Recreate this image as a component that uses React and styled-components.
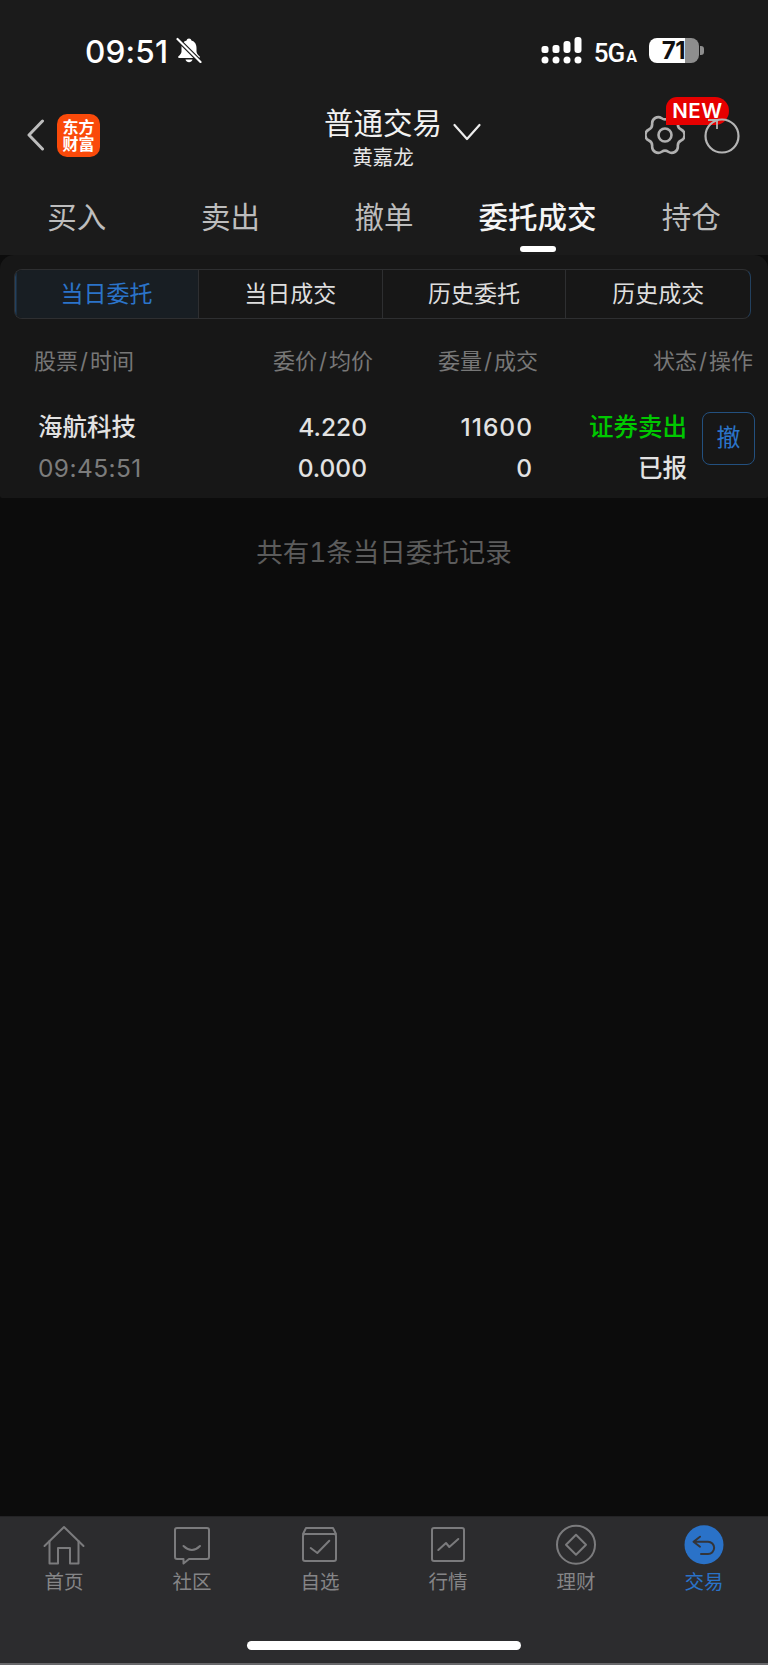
import React from 'react'
import styled, { createGlobalStyle } from 'styled-components'

const FONT = `Inter, "Noto Sans CJK SC", sans-serif`

const GlobalStyle = createGlobalStyle`
html, body {
  margin: 0;
  padding: 0;
  background: #0c0c0c;
  font-family: ${FONT};
}
* { box-sizing: border-box; }
`

const Page = styled.div`
width: 768px;
height: 1665px;
display: flex;
flex-direction: column;
background: #0c0c0c;
overflow: hidden;
`
const Top = styled.div`
background: #1b1b1b;
`
const StatusBar = styled.div`
height: 100px;
display: flex;
align-items: flex-start;
padding: 37px 64px 0 85px;
color: #fff;
`
const Time = styled.div`
font-size: 31.5px;
font-weight: 500;
line-height: 30px;
margin-right: 8px;
letter-spacing: 0.2px;
`
const StatusRight = styled.div`
margin-left: auto;
margin-top: -1px;
display: flex;
align-items: center;
`
const Network = styled.div`
font-family: Roboto, sans-serif;
font-size: 26px;
font-weight: 500;
letter-spacing: -1px;
height: 29px;
line-height: 35px;
margin-left: 12px;
margin-right: 12px;
small {
  font-size: 16px;
  font-weight: 700;
  margin-left: 2px;
  letter-spacing: 0;
}
`
const Battery = styled.div`
width: 50px;
height: 25px;
border-radius: 8px;
background: linear-gradient(90deg, #fff 72%, #8e8e8e 72%);
color: #111;
font-size: 24px;
font-weight: 700;
line-height: 25px;
text-align: right;
padding-right: 14px;
letter-spacing: -0.5px;
`
const BatteryCap = styled.div`
width: 4px;
height: 9px;
margin-left: 1px;
border-radius: 0 3px 3px 0;
background: #8e8e8e;
`

const Header = styled.div`
height: 70px;
display: flex;
align-items: center;
padding-right: 26px;
`
const BackGroup = styled.div`
width: 325px;
display: flex;
align-items: center;
padding-left: 26px;
gap: 12px;
`
const Logo = styled.div`
width: 43px;
height: 43px;
border-radius: 10px;
background: #fa4a0a;
color: #fff;
font-size: 16px;
font-weight: 700;
line-height: 17.5px;
text-align: center;
padding-top: 5px;
`
const TitleBlock = styled.div`
width: 116px;
text-align: center;
white-space: nowrap;
margin-top: 7px;
`
const Title = styled.div`
font-size: 29.5px;
line-height: 36px;
margin-left: -1px;
margin-right: -1px;
color: #f2f2f2;
`
const SubTitle = styled.div`
font-size: 20.5px;
line-height: 28px;
margin-top: 3px;
color: #e6e6e6;
`
const TitleArrow = styled.svg`
margin-left: 12px;
margin-top: -7px;
`
const Tools = styled.div`
margin-left: auto;
position: relative;
display: flex;
align-items: center;
gap: 17px;
`
const NewBadge = styled.div`
position: absolute;
left: 21px;
top: -18px;
width: 63px;
height: 28px;
border-radius: 11px 14px 14px 0;
background: #e60000;
color: #fff;
font-size: 20.5px;
font-weight: 600;
line-height: 28px;
text-align: center;
letter-spacing: 0.6px;
`
const RefreshIcon = styled.svg`
position: relative;
top: 1px;
`

const Tabs = styled.div`
height: 85px;
display: grid;
grid-template-columns: repeat(5, 1fr);
padding-top: 27px;
`
const Tab = styled.div`
position: relative;
text-align: center;
font-size: 29.5px;
line-height: 40px;
color: ${p => (p.$active ? '#f5f5f5' : '#bdbdbd')};
font-weight: ${p => (p.$active ? 500 : 400)};
${p =>
    p.$active &&
    `&::after {
  content: '';
  position: absolute;
  left: 50%;
  top: 49px;
  width: 36px;
  height: 6px;
  margin-left: -18px;
  border-radius: 3px;
  background: #fff;
}`}
`

const Panel = styled.div`
background: #171717;
border-radius: 14px 14px 2px 2px;
height: 243px;
padding-top: 14px;
`
const Segments = styled.div`
margin: 0 17px 0 14px;
height: 50px;
display: grid;
grid-template-columns: repeat(4, 1fr);
border: 1.5px solid #2e2f31;
border-right-color: #23415f;
border-radius: 8px;
overflow: hidden;
`
const Segment = styled.div`
text-align: center;
font-size: 23px;
line-height: 49px;
color: ${p => (p.$active ? '#2b74c9' : '#dedede')};
background: ${p => (p.$active ? '#181e23' : 'transparent')};
border-right: ${p => (p.$last ? 'none' : '1.5px solid #2e2f31')};
box-shadow: ${p => (p.$active ? 'inset 1.5px 0 0 #23415f' : 'none')};
`
const HeadRow = styled.div`
display: grid;
grid-template-columns: 185px 154px 165px 215px;
margin-top: 25px;
padding-left: 34px;
font-size: 22px;
line-height: 34px;
color: #777;
`
const HeadCell = styled.div`
text-align: ${p => (p.$left ? 'left' : 'right')};
`
const Slash = styled.span`
margin: 0 2px;
`
const OrderRow = styled.div`
display: grid;
grid-template-columns: 182px 147px 165px 155px 53px;
margin-top: 29px;
padding-left: 38px;
align-items: start;
`
const Cell = styled.div`
text-align: ${p => (p.$left ? 'left' : 'right')};
`
const Line = styled.div`
font-size: 24.5px;
line-height: 41px;
font-weight: 500;
white-space: nowrap;
color: ${p => p.$color || '#e2e2e2'};
`
const Quantity = styled(Line)`
letter-spacing: 1px;
margin-right: -1px;
`
const TimeLine = styled(Line)`
color: #7c7c7c;
font-weight: 400;
letter-spacing: 0.4px;
`
const Cancel = styled.div`
width: 53px;
height: 53px;
margin: 5px 0 0 15px;
border: 1.5px solid #23507f;
border-radius: 8px;
color: #2b74c9;
font-size: 24px;
line-height: 50px;
text-align: center;
`
const Notice = styled.div`
margin-top: 34px;
text-align: center;
font-size: 26.5px;
line-height: 40px;
color: #5c5c5c;
font-variant-numeric: tabular-nums;
`
const Spacer = styled.div`
flex: 1;
`

const TabBar = styled.div`
height: 149px;
background: #2c2c2e;
border-top: 1px solid #232325;
border-bottom: 2px solid #67676a;
padding-top: 6px;
position: relative;
`
const BarItems = styled.div`
display: grid;
grid-template-columns: repeat(6, 1fr);
`
const BarItem = styled.div`
display: flex;
flex-direction: column;
align-items: center;
font-size: 19.5px;
line-height: 26px;
gap: 2px;
color: ${p => (p.$active ? '#2a72c8' : '#858587')};
`
const HomeIndicator = styled.div`
position: absolute;
left: 247px;
top: 124px;
width: 274px;
height: 9px;
border-radius: 5px;
background: #fff;
`

// six-lobed outline, rounded by running quadratics through the midpoints
const gearPath = (cx, cy, outer, inner) => {
    const pts = []
    for (let k = 0; k < 6; k++) {
        const t = k * 60
        ;[[inner, t - 30], [outer, t - 11], [outer, t + 11]].forEach(([r, a]) => {
            const rad = (a * Math.PI) / 180
            pts.push([cx + r * Math.cos(rad), cy + r * Math.sin(rad)])
        })
    }
    const mid = (a, b) => [(a[0] + b[0]) / 2, (a[1] + b[1]) / 2]
    const start = mid(pts[pts.length - 1], pts[0])
    let d = `M${start[0].toFixed(2)} ${start[1].toFixed(2)}`
    pts.forEach((p, i) => {
        const m = mid(p, pts[(i + 1) % pts.length])
        d += ` Q${p[0].toFixed(2)} ${p[1].toFixed(2)} ${m[0].toFixed(2)} ${m[1].toFixed(2)}`
    })
    return d + 'Z'
}

const BellOff = () => (
    <svg width="26" height="26" viewBox="0 0 26 26">
        <path fill="#fff" d="M13 1.500c1.300 0 2.200.8 2.400 1.900C19 4.400 20.500 7.400 20.500 11v3.500c0 2 1.400 3.200 3 4.800.8.800.3 1.700-.7 1.700H3.200c-1 0-1.500-.9-.7-1.700 1.600-1.600 3-2.800 3-4.800V11c0-3.600 1.500-6.600 5.100-7.600.2-1.100 1.100-1.900 2.400-1.900z" />
        <path fill="#fff" d="M9.500 22.500h7c-.5 1.700-1.900 2.800-3.500 2.800s-3-1.100-3.500-2.800z" />
        <path d="M2 2.500 24 24.500" stroke="#1b1b1b" strokeWidth="4.500" />
        <path d="M1.500 2 24.500 25" stroke="#fff" strokeWidth="2.200" strokeLinecap="round" />
    </svg>
)

const Signal = () => (
    <svg width="41" height="29" viewBox="0 0 41 29" fill="#fff">
        {[4, 15, 26, 37].map(x => <circle key={x} cx={x} cy="24" r="3.500" />)}
        <rect x="0.500" y="10" width="7" height="7" rx="2.500" />
        <rect x="11.500" y="9" width="7" height="8" rx="2.500" />
        <rect x="22.500" y="5" width="7" height="12" rx="3" />
        <rect x="33.500" y="1" width="7" height="16" rx="3" />
    </svg>
)

const IconBox = ({ children }) => (
    <svg width="44" height="44" viewBox="0 0 44 44" fill="none" stroke="#7b7b7d" strokeWidth="2" strokeLinejoin="round" strokeLinecap="round">
        {children}
    </svg>
)

const navItems = [
    { label: '首页', icon: <><path d="M2.500 23 22 4l19.500 19" /><path d="M7.500 18v22.500H16V25h12v15.500h8.500V18" /></> },
    { label: '社区', icon: <><path d="M7 5h30a2 2 0 0 1 2 2v27a2 2 0 0 1-2 2H19l-5.500 4.500V36H7a2 2 0 0 1-2-2V7a2 2 0 0 1 2-2z" /><path d="M13.500 23Q22 31 30 23" /></> },
    { label: '自选', icon: <><rect x="5" y="11" width="33" height="27" rx="2" /><path d="M5 11 8 5h27l3 6" /><path d="M12.700 25l6.600 5 12-12.300" /></> },
    { label: '行情', icon: <><rect x="6" y="5" width="32" height="33" rx="2" /><path d="M12.300 27 20 20l3.300 4 9-8" /></> },
    { label: '理财', icon: <><circle cx="22" cy="21.700" r="19" /><path d="M22 11.700 32 21.700 22 31.700 12 21.700z" /></> },
    {
        label: '交易',
        active: true,
        icon: <><circle cx="22" cy="21.700" r="19.500" fill="#2a72c8" stroke="none" /><path d="M18 13.700 11.500 18.700 18 23.700M12 18.700H26A6 6 0 0 1 26 31H19" stroke="#33353a" /></>,
    },
]

const heads = [['股票', '时间', true], ['委价', '均价'], ['委量', '成交'], ['状态', '操作']]

const App = () => {
    return (
        <Page>
            <GlobalStyle />
            <Top>
                <StatusBar>
                    <Time>09:51</Time>
                    <BellOff />
                    <StatusRight>
                        <Signal />
                        <Network>5G<small>A</small></Network>
                        <Battery>71</Battery>
                        <BatteryCap />
                    </StatusRight>
                </StatusBar>
                <Header>
                    <BackGroup>
                        <svg width="19" height="32" viewBox="0 0 19 32" fill="none">
                            <path d="M16.500 2 3 16l13.500 14" stroke="#bdbdbd" strokeWidth="3" strokeLinecap="round" strokeLinejoin="round" />
                        </svg>
                        <Logo>东方<br />财富</Logo>
                    </BackGroup>
                    <TitleBlock>
                        <Title>普通交易</Title>
                        <SubTitle>黄嘉龙</SubTitle>
                    </TitleBlock>
                    <TitleArrow width="28" height="18" viewBox="0 0 28 18" fill="none">
                        <path d="M1.500 2 14 16 26.500 2" stroke="#ededed" strokeWidth="2.200" strokeLinecap="round" strokeLinejoin="round" />
                    </TitleArrow>
                    <Tools>
                        <svg width="40" height="40" viewBox="0 0 40 40" fill="none" stroke="#b0b0b0" strokeWidth="2.600">
                            <path d={gearPath(20, 20, 20, 14.500)} />
                            <circle cx="20" cy="20" r="6.500" />
                        </svg>
                        <NewBadge>NEW</NewBadge>
                        <RefreshIcon width="40" height="40" viewBox="0 0 40 40" fill="none" stroke="#b4b4b4" strokeWidth="2.200">
                            <circle cx="20" cy="20" r="16.500" />
                            <path d="M6 4H15V13" strokeWidth="1.800" />
                        </RefreshIcon>
                    </Tools>
                </Header>
                <Tabs>
                    <Tab>买入</Tab>
                    <Tab>卖出</Tab>
                    <Tab>撤单</Tab>
                    <Tab $active>委托成交</Tab>
                    <Tab>持仓</Tab>
                </Tabs>
            </Top>
            <Panel>
                <Segments>
                    <Segment $active>当日委托</Segment>
                    <Segment>当日成交</Segment>
                    <Segment>历史委托</Segment>
                    <Segment $last>历史成交</Segment>
                </Segments>
                <HeadRow>
                    {heads.map(([a, b, left]) => (
                        <HeadCell key={a} $left={left}>{a}<Slash>/</Slash>{b}</HeadCell>
                    ))}
                </HeadRow>
                <OrderRow>
                    <Cell $left>
                        <Line>海航科技</Line>
                        <TimeLine>09:45:51</TimeLine>
                    </Cell>
                    <Cell>
                        <Line>4.220</Line>
                        <Line>0.000</Line>
                    </Cell>
                    <Cell>
                        <Quantity>11600</Quantity>
                        <Line>0</Line>
                    </Cell>
                    <Cell>
                        <Line $color="#00c800">证券卖出</Line>
                        <Line>已报</Line>
                    </Cell>
                    <Cancel>撤</Cancel>
                </OrderRow>
            </Panel>
            <Notice>共有1条当日委托记录</Notice>
            <Spacer />
            <TabBar>
                <BarItems>
                    {navItems.map(item => (
                        <BarItem key={item.label} $active={item.active}>
                            <IconBox>{item.icon}</IconBox>
                            {item.label}
                        </BarItem>
                    ))}
                </BarItems>
                <HomeIndicator />
            </TabBar>
        </Page>
    )
}

export default App
